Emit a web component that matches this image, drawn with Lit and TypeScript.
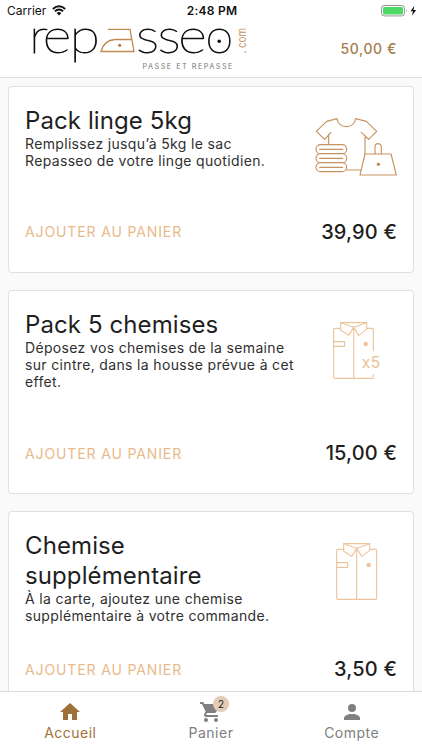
import { LitElement, html, svg, css } from "lit";
import { customElement, property } from "lit/decorators.js";

interface Product {
  title: string[];
  text: string[];
  price: string;
  icon: "laundry" | "shirts" | "shirt";
}

const products: Product[] = [
  {
    title: ["Pack linge 5kg"],
    text: ["Remplissez jusqu’à 5kg le sac", "Repasseo de votre linge quotidien."],
    price: "39,90 €",
    icon: "laundry",
  },
  {
    title: ["Pack 5 chemises"],
    text: ["Déposez vos chemises de la semaine", "sur cintre, dans la housse prévue à cet", "effet."],
    price: "15,00 €",
    icon: "shirts",
  },
  {
    title: ["Chemise", "supplémentaire"],
    text: ["À la carte, ajoutez une chemise", "supplémentaire à votre commande."],
    price: "3,50 €",
    icon: "shirt",
  },
];

const collar = svg`
  <path d="M122 38H200V58L176 76L161 52L146 76L122 61Z" />
  <path d="M122 38L161 52L200 38" />
  <path d="M161 52V205" />
  <path d="M101 95H134V109H101" />
  <circle class="dot" cx="197" cy="102" r="5" />`;

@customElement("product-icon")
export class ProductIcon extends LitElement {
  @property() name = "";

  static styles = css`
    :host { display: block; flex: none; width: 98px; height: 80px; margin-bottom: -20px; }
    .icon { display: block; width: 98px; height: 80px; fill: none; stroke: #ecc49d; stroke-width: 3.4; stroke-linejoin: round; stroke-linecap: round; }
    .dark { stroke: #c79360; stroke-width: 3.4; }
    .white { fill: #fff; }
    .dot { fill: #ecc49d; }
    .dark .dot { fill: #b07a48; stroke-width: 2; }
    .count { fill: #ecbf94; stroke: none; font: 400 47px Inter, sans-serif; }
  `;

  render() {
    if (this.name === "laundry") {
      return html`<svg class="icon dark" viewBox="21 18 294 240">
        <path d="M86 134V104M93 97L74 118L49 94L80 64L111 56C114 88 164 88 167 56L199 64L230 94L206 118L184 97M195 106V162M140 210H183" />
        <rect class="white" x="48" y="134" width="92" height="27" rx="13.5" />
        <rect class="white" x="48" y="161" width="92" height="27" rx="13.5" />
        <rect class="white" x="48" y="188" width="92" height="27" rx="13.5" />
        <path d="M59 148H128M59 175H128M59 202H128" />
        <path class="white" d="M195 162H273L289 225H180Z" />
        <path d="M225 161V140Q226 131 234 131Q243 131 244 140V161" />
        <circle class="dot" cx="235" cy="193" r="4" />
      </svg>`;
    }
    if (this.name === "shirts") {
      return html`<svg class="icon" viewBox="21 0 294 240">
        <path d="M122 55H104Q101 55 101 58V202Q101 205 104 205H217Q220 205 220 202V194M200 55H217Q220 55 220 58V122" />
        ${collar}
        <text class="count" x="185" y="173" textLength="56">x5</text>
      </svg>`;
    }
    return html`<svg class="icon" viewBox="12 0 294 240">
      <path d="M122 55H104Q101 55 101 58V202Q101 205 104 205H218Q221 205 221 202V58Q221 55 218 55H200" />
      ${collar}
    </svg>`;
  }
}

@customElement("product-card")
export class ProductCard extends LitElement {
  @property({ attribute: false }) product!: Product;

  static styles = css`
    :host { display: block; }
    .card { box-sizing: border-box; border: 1px solid #e2e2e2; border-radius: 4px; background: #fff; padding: 19px 8px 25px 16px; box-shadow: 0 0 1px #e8e8e8; }
    .top { display: flex; justify-content: space-between; align-items: flex-start; }
    .title { font-size: 24px; line-height: 29.5px; letter-spacing: 0.1px; color: #1f1f1f; white-space: nowrap; }
    .text { font-size: 14px; line-height: 17.2px; letter-spacing: 0.34px; color: #303030; white-space: nowrap; }
    .copy { flex: 1; min-width: 0; padding-top: 0.3px; }
    .desc { margin-top: -0.8px; padding-bottom: 0.5px; }
    .bottom { display: flex; justify-content: space-between; align-items: center; height: 30px; margin-top: 47px; padding-right: 8px; }
    .tight { margin-top: 30px; }
    .add { all: unset; font-size: 14px; letter-spacing: 0.87px; color: #e8ba8b; }
    .price { font-size: 20px; font-weight: 500; letter-spacing: 0.15px; color: #1f1f1f; }
  `;

  render() {
    const p = this.product;
    return html`<article class="card">
      <div class="top">
        <div class="copy">
          ${p.title.map((l) => html`<div class="title">${l}</div>`)}
          <div class="desc">${p.text.map((l) => html`<div class="text">${l}</div>`)}</div>
        </div>
        <product-icon name=${p.icon}></product-icon>
      </div>
      <div class="bottom ${p.title.length > 1 ? "tight" : ""}">
        <button class="add">AJOUTER AU PANIER</button>
        <span class="price">${p.price}</span>
      </div>
    </article>`;
  }
}

@customElement("app-root")
export class AppRoot extends LitElement {
  static styles = css`
    :host { display: flex; flex-direction: column; width: 422px; height: 750px; overflow: hidden; background: #fafafa; font-family: Inter, sans-serif; }
    .status { display: grid; grid-template-columns: 1fr auto 1fr; align-items: center; flex: none; height: 21px; padding: 0 5px 0 7px; background: #fff; font-size: 12px; color: #111; }
    .left { display: flex; align-items: center; gap: 6px; }
    .clock { font-weight: 600; letter-spacing: 0.25px; }
    .right { display: flex; justify-content: flex-end; align-items: center; }
    .sym { display: block; }
    .header { display: flex; justify-content: space-between; box-sizing: border-box; flex: none; height: 57px; padding-right: 25px; background: #fff; border-bottom: 1px solid #dedede; }
    .logo { display: block; overflow: visible; }
    .word { font: 100 48px Lato, sans-serif; fill: #111; stroke: #111; stroke-width: 0.85px; }
    .tag { font: 400 7.3px Inter, sans-serif; fill: #777; }
    .com { font: 400 11px Inter, sans-serif; fill: #c79360; }
    .iron { fill: none; stroke: #c08a50; stroke-width: 1.3; }
    .credit { padding-top: 19px; font-size: 14px; line-height: 17px; font-weight: 500; letter-spacing: 0.6px; color: #a67b4d; }
    .list { display: flex; flex-direction: column; gap: 17px; flex: 1; min-height: 0; overflow: hidden; padding: 8px 8px 0; }
    .nav { display: grid; grid-template-columns: repeat(3, 1fr); box-sizing: border-box; flex: none; height: 59px; background: #fff; border-top: 1px solid #dcdcdc; color: #808080; }
    .tab { display: flex; flex-direction: column; align-items: center; padding-top: 8px; }
    .active { color: #a0703b; }
    .glyph { position: relative; width: 24px; height: 24px; }
    .glyph svg { display: block; fill: currentColor; }
    .label { font-size: 14px; line-height: 18px; letter-spacing: 0.5px; }
    .badge { position: absolute; left: 14px; top: -4px; width: 16px; height: 16px; border-radius: 8px; background: #e3ccb6; color: #222; font-size: 10px; line-height: 16px; text-align: center; }
  `;

  render() {
    return html`
      <div class="status">
        <div class="left">
          <span>Carrier</span>
          <svg class="sym" width="14" height="11" viewBox="0 0 14 11">
            <path d="M.8 4Q7-1.5 13.2 4M2.9 6.2Q7 2.7 11.1 6.2" fill="none" stroke="#111" stroke-width="1.8" />
            <path d="M7 10.4L4.6 8Q7 6 9.4 8Z" fill="#111" />
          </svg>
        </div>
        <span class="clock">2:48 PM</span>
        <div class="right">
          <svg class="sym" width="37" height="12" viewBox="0 0 37 12">
            <rect x="1.5" y=".5" width="23" height="10.4" rx="2.6" fill="#fff" stroke="#999" />
            <rect x="3" y="2" width="20" height="7.4" rx="1.2" fill="#4cd964" />
            <path d="M26 4Q27.6 5.7 26 7.4Z" fill="#999" />
            <path d="M34.4 .7L30.5 6.2H33L31.8 10.7L36.2 4.9H33.5Z" fill="#111" />
          </svg>
        </div>
      </div>
      <header class="header">
        <svg class="logo" width="260" height="56" viewBox="0 21 260 56">
          <text class="word" transform="scale(1.15 1)" x="25.2 37.2 60.6" y="53">rep</text>
          <text class="word" transform="scale(1.15 1)" x="118.2 137 155" y="53">sse</text>
          <text class="word" transform="scale(1.05 1)" x="195.6" y="53">o</text>
          <circle cx="219.2" cy="41.3" r="1.8" fill="#111" />
          <path class="iron" d="M108 29.3H130L134 51.5H101Q104 40 115 39.5H131.6" />
          <circle cx="119.7" cy="45.3" r="1.6" fill="#b67f42" />
          <text class="tag" x="142.5" y="68.5" textLength="90">PASSE ET REPASSE</text>
          <text class="com" transform="translate(246 53.5) rotate(-90)" x="0" y="0">.</text>
          <text class="com" transform="translate(246 48) rotate(-90)" x="0" y="0" textLength="20" lengthAdjust="spacingAndGlyphs">com</text>
        </svg>
        <div class="credit">50,00 €</div>
      </header>
      <main class="list">
        ${products.map((p) => html`<product-card .product=${p}></product-card>`)}
      </main>
      <nav class="nav">
        <div class="tab active">
          <div class="glyph"><svg width="24" height="24" viewBox="0 0 24 24"><path d="M10 20V14H14V20H19V12H22L12 3L2 12H5V20Z" /></svg></div>
          <span class="label">Accueil</span>
        </div>
        <div class="tab">
          <div class="glyph">
            <svg width="24" height="24" viewBox="0 0 24 24"><path d="M17 18A2 2 0 1 1 17 22A2 2 0 1 1 17 18M1 2H4.27L5.21 4H20A1 1 0 0 1 21 5C21 5.17 20.95 5.34 20.88 5.5L17.3 11.97C16.96 12.58 16.3 13 15.55 13H8.1L7.2 14.63L7.17 14.75A.25.25 0 0 0 7.42 15H19V17H7A2 2 0 0 1 5 15C5 14.65 5.09 14.32 5.24 14.04L6.6 11.59L3 4H1V2M7 18A2 2 0 1 1 7 22A2 2 0 1 1 7 18" /></svg>
            <span class="badge">2</span>
          </div>
          <span class="label">Panier</span>
        </div>
        <div class="tab">
          <div class="glyph"><svg width="24" height="24" viewBox="0 0 24 24"><circle cx="12" cy="8" r="4" /><path d="M12 14C16.42 14 20 15.79 20 18V20H4V18C4 15.79 7.58 14 12 14Z" /></svg></div>
          <span class="label">Compte</span>
        </div>
      </nav>`;
  }
}
